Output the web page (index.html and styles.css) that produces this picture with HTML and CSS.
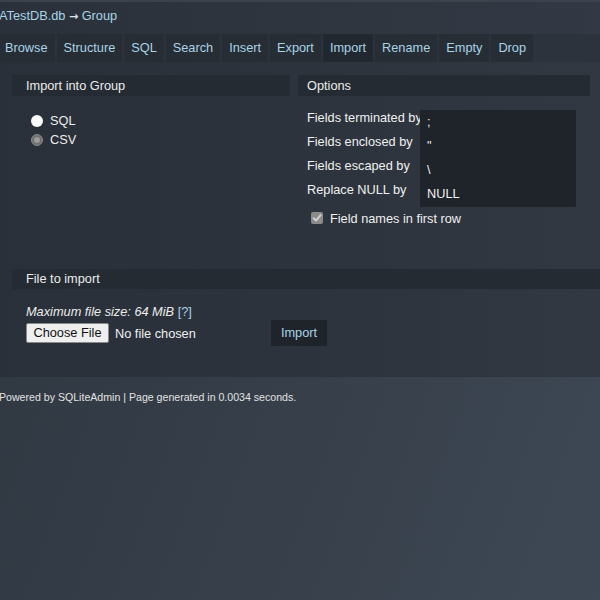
FILE: index.html
```html
<!DOCTYPE html>
<html>
<head>
<meta charset="utf-8">
<link rel="stylesheet" href="styles.css">
</head>
<body>
<div class="page">
  <div class="crumb"><a class="link">ATestDB.db</a> <span class="arrow">→</span> <a class="link">Group</a></div>
  <nav class="tabs">
    <a class="tab">Browse</a>
    <a class="tab">Structure</a>
    <a class="tab">SQL</a>
    <a class="tab">Search</a>
    <a class="tab">Insert</a>
    <a class="tab">Export</a>
    <a class="tab active">Import</a>
    <a class="tab">Rename</a>
    <a class="tab">Empty</a>
    <a class="tab">Drop</a>
  </nav>
  <main class="panel">
    <div class="cols">
      <section class="col left">
        <div class="bar bar-left">Import into Group</div>
        <div class="radios">
          <label class="radio-row"><span class="radio radio-off"></span>SQL</label>
          <label class="radio-row"><span class="radio radio-on"><span class="dot"></span></span>CSV</label>
        </div>
      </section>
      <section class="col right">
        <div class="bar bar-right">Options</div>
        <div class="opts">
          <div class="labels">
            <div class="lab">Fields terminated by</div>
            <div class="lab">Fields enclosed by</div>
            <div class="lab">Fields escaped by</div>
            <div class="lab">Replace NULL by</div>
          </div>
          <div class="inputs">
            <div class="inp">;</div>
            <div class="inp">"</div>
            <div class="inp">\</div>
            <div class="inp">NULL</div>
          </div>
        </div>
        <label class="check-row">
          <span class="check"><svg width="12" height="12" viewBox="0 0 12 12"><path d="M2.6 6.2 L5 8.6 L9.6 3.2" fill="none" stroke="#d4d4d4" stroke-width="1.8" stroke-linecap="round" stroke-linejoin="round"/></svg></span>
          Field names in first row
        </label>
      </section>
    </div>
    <section class="file">
      <div class="bar bar-file">File to import</div>
      <div class="file-body">
        <div class="maxsize">Maximum file size: 64 MiB <a class="link help">[?]</a></div>
        <div class="file-row">
          <span class="choose">Choose File</span>
          <span class="nofile">No file chosen</span>
          <span class="import-btn">Import</span>
        </div>
      </div>
    </section>
  </main>
  <footer class="footer">Powered by SQLiteAdmin | Page generated in 0.0034 seconds.</footer>
</div>
</body>
</html>
```

FILE: styles.css
```css
* { box-sizing: border-box; }
html, body { margin: 0; padding: 0; }
body {
  width: 600px;
  height: 600px;
  overflow: hidden;
  font-family: "Liberation Sans", Arial, sans-serif;
  font-size: 12.75px;
  color: #ececec;
  background: linear-gradient(110deg, #2f3640 0%, #353e49 50%, #3e4854 100%);
}
.page { width: 600px; }
.link { color: #a9d3e6; text-decoration: none; }
.crumb {
  height: 34px;
  padding: 6px 0 0 0;
  line-height: 15px;
  margin-left: -1px;
  color: #d8e6ee;
  border-top: 2px solid #3b424c;
  background: linear-gradient(90deg, #2b313a, #323944);
}
.arrow { font-family: "DejaVu Sans", sans-serif; font-size: 11px; font-weight: bold; }
.tabs {
  display: flex;
  gap: 2px;
  height: 28px;
  margin-left: -2px;
  background: #2c333c;
}
.tab {
  padding: 0 7px;
  line-height: 28px;
  color: #a9d3e6;
  background: #272d35;
}
.tab.active { background: #22282f; }
.panel {
  height: 315px;
  padding: 13px 0 0 12px;
  background: linear-gradient(90deg, #2a3039 0%, #2d343d 60%, #313842 100%);
}
.cols { display: flex; gap: 8px; height: 194px; }
.col.left { width: 278px; }
.col.right { width: 292px; }
.bar {
  height: 21px;
  line-height: 21px;
  color: #ebebeb;
  background: #252b33;
}
.bar-left { padding-left: 14px; }
.bar-right { padding-left: 9px; }
.radios { padding: 15px 0 0 19px; }
.radio-row { display: flex; align-items: center; gap: 7px; height: 19px; line-height: 15px; }
.radio {
  width: 12px; height: 12px; border-radius: 50%;
  display: inline-flex; align-items: center; justify-content: center;
}
.radio-off { background: #fafafa; }
.radio-on { background: #6f6f6f; border: 1px solid #8a8a8a; }
.radio-on .dot { width: 6px; height: 6px; border-radius: 50%; background: #9b9b9b; }
.opts { display: flex; padding: 14px 0 0 9px; }
.labels { width: 113px; white-space: nowrap; }
.lab { height: 24px; line-height: 15px; color: #f0f0f0; }
.inputs { width: 156px; background: #1f232a; height: 97px; }
.inp { height: 24px; line-height: 24px; padding-left: 7px; color: #f0f0f0; }
.check-row { display: flex; align-items: center; gap: 7px; height: 20px; margin: 1px 0 0 13px; color: #f0f0f0; }
.check {
  width: 12px; height: 12px; border-radius: 2px;
  background: #8b8b8b;
  display: inline-flex; align-items: center; justify-content: center;
}
.check svg { display: block; }
.bar-file { padding-left: 14px; height: 20px; line-height: 20px; margin-right: -20px; }
.file-body { padding: 15px 0 0 14px; }
.maxsize { font-style: italic; line-height: 15px; color: #ececec; }
.help { font-style: normal; }
.file-row { display: flex; align-items: center; margin-top: 1px; }
.choose {
  width: 83px; height: 20px; line-height: 18px;
  text-align: center;
  background: #efefef; color: #111;
  border: 1px solid #8a8a8a; border-radius: 2px;
}
.nofile { margin-left: 6px; width: 156px; color: #f0f0f0; }
.import-btn {
  width: 56px; height: 26px; line-height: 26px; text-align: center;
  background: #1f242b; color: #a9d3e6;
}
.footer {
  padding-top: 14px;
  font-size: 10.6px;
  line-height: 13px;
  color: #e2e2e2;
  margin-left: -1px;
}
```
